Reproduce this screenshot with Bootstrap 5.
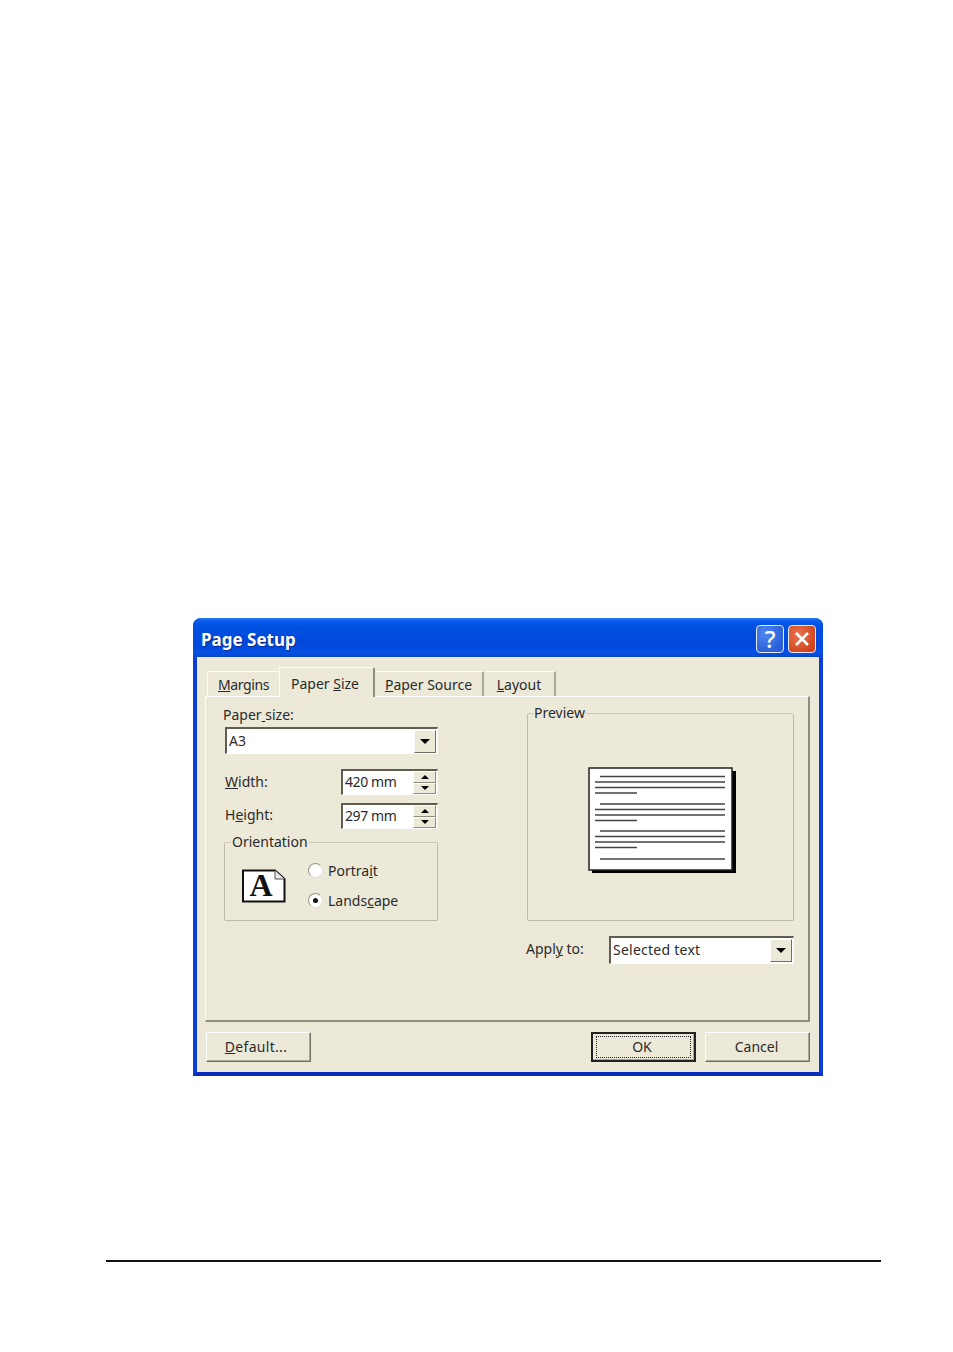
<!DOCTYPE html>
<html lang="en">
<head>
<meta charset="utf-8">
<title>Page Setup</title>
<link href="https://cdn.jsdelivr.net/npm/bootstrap@5.3.0/dist/css/bootstrap.min.css" rel="stylesheet">
<style>
body{background:#fff;font-family:"Noto Sans","Liberation Sans",sans-serif;font-size:14px;line-height:18px;color:#2b2b2b}
u{text-underline-offset:1px;text-decoration-thickness:1px}
.xp-page{padding-top:618px}
.xp-dialog{margin-left:193px;width:630px;height:458px;background:#ece9d8;border:solid #0a3ed6;border-width:0 4px 4px;border-bottom-color:#0a2dc0;border-radius:8px 8px 0 0}
.xp-title{height:39px;margin:0 -4px;padding:0 7px 0 8px;border-radius:8px 8px 0 0;background:linear-gradient(#2a78f4 0,#0a5cec 3px,#0050e0 9px,#0048dc 26px,#0550e2 34px,#0a47d0 39px)}
.xp-title-text{font-weight:700;font-size:17px;color:#fff;text-shadow:1px 1px 1px #0a2a90;margin-top:4px}
.xp-tbtns{margin-top:2px}
.xp-tbtn{width:28px;height:28px;border:1px solid #e6ecfb;border-radius:4px}
.xp-help{background:radial-gradient(circle at 30% 30%,#4f86ee,#2a5fd8 75%);color:#fff;font-size:24px;font-weight:500}
.xp-close{background:radial-gradient(circle at 35% 35%,#e8754f,#d0421c 80%)}
.xp-tabs{padding:10px 0 0 10px;height:39px;align-items:flex-end}
.xp-tab{height:25px;padding:4px 0 0;text-align:center;background:#ece9d8;border-top:1px solid #fff;border-right:2px solid #aca899;border-radius:2px 2px 0 0}
.xp-tab-1{width:72px;border-left:1px solid #fff;border-right:0;letter-spacing:-.4px}
.xp-tab-2{width:96px;height:30px;padding:7px 3px 0 0;border-left:1px solid #fff;margin-bottom:-1px;position:relative;z-index:1;border-right:2px solid #8f8c7d}
.xp-tab-3{width:109px}
.xp-tab-4{width:72px}
.xp-panel{margin-left:8px;width:605px;height:326px;border:solid;border-width:1px 2px 2px 1px;border-color:#fff #8f8c7d #8f8c7d #fff;padding-top:7px}
.xp-left{width:214px;margin-left:18px;padding-top:2px}
.xp-right{width:267px;margin-left:89px}
.xp-lift2{margin-bottom:2px}
.xp-nudge-l{margin-left:-1px}
.xp-nudge-r{margin-left:1px}
.xp-combo,.xp-spin{background:#fff;border:solid;border-width:2px 1px 1px 2px;border-color:#5f5d52 #f8f7f0 #fff #5f5d52;padding-left:2px}
.xp-combo{height:27px;margin:3px 0 0 1px;padding-right:1px}
.xp-spin{width:97px;height:26px;padding-right:1px;letter-spacing:-.4px}
.xp-arrow{width:22px;height:23px;background:#ece9d8;border:solid 1px;border-color:#fff #716f64 #716f64 #fff}
.xp-tri{width:0;height:0;border-left:5px solid transparent;border-right:5px solid transparent;border-top:5px solid #000}
.xp-tri-up{border-top:0;border-bottom:4px solid #000;border-left-width:4px;border-right-width:4px}
.xp-tri-dn{border-left-width:4px;border-right-width:4px;border-top-width:4px}
.xp-step{width:23px;height:11.5px;background:#ece9d8;border:solid 1px;border-color:#fff #8f8c7d #8f8c7d #fff}
.xp-row{height:26px}
.xp-r1{margin-top:15px}
.xp-r2{margin-top:8px}
.xp-group{border:1px solid #bdbaa9;border-top-color:#c9c6b5;margin:0;padding:0;border-radius:2px}
.xp-group legend{float:none;width:auto;font-size:14px;line-height:16px;margin:0 0 0 6px;padding:1px}
.xp-preview legend{margin-left:5px}
.xp-orient{margin-top:4px;height:88px}
.xp-preview{height:217px}
.xp-sheet{margin-top:45px;padding-left:2px}
.xp-orient-body{padding:0 0 0 17px}
.xp-icon{margin-top:13px;margin-right:22px;flex:none}
.xp-radio{width:15px;height:15px;border-radius:50%;background:#fff;border:1px solid #9a978a;border-right-color:#e4e2d6;border-bottom-color:#e4e2d6;margin-right:5px}
.xp-radio-on::after{content:"";width:5px;height:5px;border-radius:50%;background:#111}
.xp-opts{padding-top:10px;gap:12px}
.xp-opt{height:18px}
.xp-opt-text{margin-top:2px}
.xp-apply{margin-top:15px;height:28px}
.xp-apply-combo{width:185px;height:28px;margin:0;letter-spacing:.25px}
.xp-btns{padding:10px 9px 0 9px}
.xp-btn{width:105px;height:30px;border-radius:0;padding:0;font-size:14px;line-height:18px;color:#2b2b2b;background:#ece9d8;border:1px solid;border-color:#fff #716f64 #716f64 #fff;box-shadow:inset -1px -1px 0 #aca899}
.xp-btn:hover,.xp-btn:active{background:#ece9d8;color:#2b2b2b;border-color:#fff #716f64 #716f64 #fff}
.xp-btn-default{padding-right:5px;letter-spacing:.3px}
.xp-btn-cancel{padding-right:2px}
.xp-btn-ok,.xp-btn-ok:hover{border:2px solid #222;box-shadow:inset -1px -1px 0 #aca899;margin-left:auto;margin-right:9px;padding:0}
.xp-focus{display:block;margin:2px 3px;height:22px;border:1px dotted #222;padding-right:3px;line-height:19px}
.xp-rule{margin:184px 0 0 106px;width:775px;height:2px;background:#111}
</style>
</head>
<body>
<div class="xp-page">
  <div class="xp-dialog">
    <div class="xp-title d-flex align-items-center justify-content-between">
      <div class="xp-title-text">Page Setup</div>
      <div class="xp-tbtns d-flex gap-1">
        <div class="xp-tbtn xp-help d-flex align-items-center justify-content-center">?</div>
        <div class="xp-tbtn xp-close d-flex align-items-center justify-content-center">
          <svg width="16" height="16" viewBox="0 0 16 16"><path d="M2 2 L14 14 M14 2 L2 14" stroke="#fff" stroke-width="2.6" fill="none"/></svg>
        </div>
      </div>
    </div>
    <div class="xp-tabs d-flex">
      <div class="xp-tab xp-tab-1"><u>M</u>argins</div>
      <div class="xp-tab xp-tab-2">Paper <u>S</u>ize</div>
      <div class="xp-tab xp-tab-3"><u>P</u>aper Source</div>
      <div class="xp-tab xp-tab-4"><u>L</u>ayout</div>
    </div>
    <div class="xp-panel d-flex">
      <div class="xp-left">
        <div class="xp-nudge-l">Paper<u> </u>size:</div>
        <div class="xp-combo d-flex align-items-center justify-content-between">
          <span>A3</span>
          <span class="xp-arrow d-flex align-items-center justify-content-center"><span class="xp-tri"></span></span>
        </div>
        <div class="xp-row xp-r1 d-flex align-items-center justify-content-between">
          <span class="xp-nudge-r"><u>W</u>idth:</span>
          <div class="xp-spin d-flex align-items-center justify-content-between">
            <span class="xp-lift2">420 mm</span>
            <span class="d-flex flex-column">
              <span class="xp-step d-flex align-items-center justify-content-center"><span class="xp-tri xp-tri-up"></span></span>
              <span class="xp-step d-flex align-items-center justify-content-center"><span class="xp-tri xp-tri-dn"></span></span>
            </span>
          </div>
        </div>
        <div class="xp-row xp-r2 d-flex align-items-center justify-content-between">
          <span class="xp-lift2 xp-nudge-r">H<u>e</u>ight:</span>
          <div class="xp-spin d-flex align-items-center justify-content-between">
            <span class="xp-lift2">297 mm</span>
            <span class="d-flex flex-column">
              <span class="xp-step d-flex align-items-center justify-content-center"><span class="xp-tri xp-tri-up"></span></span>
              <span class="xp-step d-flex align-items-center justify-content-center"><span class="xp-tri xp-tri-dn"></span></span>
            </span>
          </div>
        </div>
        <fieldset class="xp-group xp-orient">
          <legend>Orientation</legend>
          <div class="xp-orient-body d-flex">
            <svg class="xp-icon" width="44" height="44" viewBox="0 -5 44 44">
              <path d="M1 1.5 H33 L42.5 10 V32.5 H1 Z" fill="#fff" stroke="#111" stroke-width="2"/>
              <path d="M33 1.5 V10 H42.5" fill="#e8e8e8" stroke="#555" stroke-width="1"/>
              <text x="19" y="27" text-anchor="middle" font-family="Liberation Serif" font-weight="700" font-size="32" fill="#111">A</text>
            </svg>
            <div class="xp-opts d-flex flex-column">
              <div class="xp-opt d-flex align-items-center"><span class="xp-radio d-flex align-items-center justify-content-center"></span><span class="xp-opt-text">Portra<u>i</u>t</span></div>
              <div class="xp-opt d-flex align-items-center"><span class="xp-radio xp-radio-on d-flex align-items-center justify-content-center"></span><span class="xp-opt-text">Lands<u>c</u>ape</span></div>
            </div>
          </div>
        </fieldset>
      </div>
      <div class="xp-right">
        <fieldset class="xp-group xp-preview">
          <legend>Preview</legend>
          <div class="xp-sheet d-flex justify-content-center">
            <svg width="148" height="107" viewBox="588 766 148 107">
              <rect x="592" y="770" width="144" height="102" fill="#000"/>
              <rect x="589" y="767" width="143" height="102" fill="#fff" stroke="#222" stroke-width="1.5"/>
              <g stroke="#444" stroke-width="1.4">
                <path d="M600 775.5H725M595 781H725M595 786.5H725M595 792H637"/>
                <path d="M600 803H725M595 808.5H725M595 814H725M595 819.5H637"/>
                <path d="M600 830H725M595 835.5H725M595 841H725M595 846.5H637"/>
                <path d="M600 858H725"/>
              </g>
            </svg>
          </div>
        </fieldset>
        <div class="xp-apply d-flex align-items-center justify-content-between">
          <span class="xp-lift2 xp-nudge-l">Appl<u>y</u> to:</span>
          <div class="xp-combo xp-apply-combo d-flex align-items-center justify-content-between">
            <span class="xp-lift2">Selected text</span>
            <span class="xp-arrow d-flex align-items-center justify-content-center"><span class="xp-tri"></span></span>
          </div>
        </div>
      </div>
    </div>
    <div class="xp-btns d-flex">
      <button type="button" class="btn xp-btn xp-btn-default"><u>D</u>efault...</button>
      <button type="button" class="btn xp-btn xp-btn-ok"><span class="xp-focus">OK</span></button>
      <button type="button" class="btn xp-btn xp-btn-cancel">Cancel</button>
    </div>
  </div>
  <div class="xp-rule"></div>
</div>
<script src="https://cdn.jsdelivr.net/npm/bootstrap@5.3.0/dist/js/bootstrap.bundle.min.js"></script>
</body>
</html>
